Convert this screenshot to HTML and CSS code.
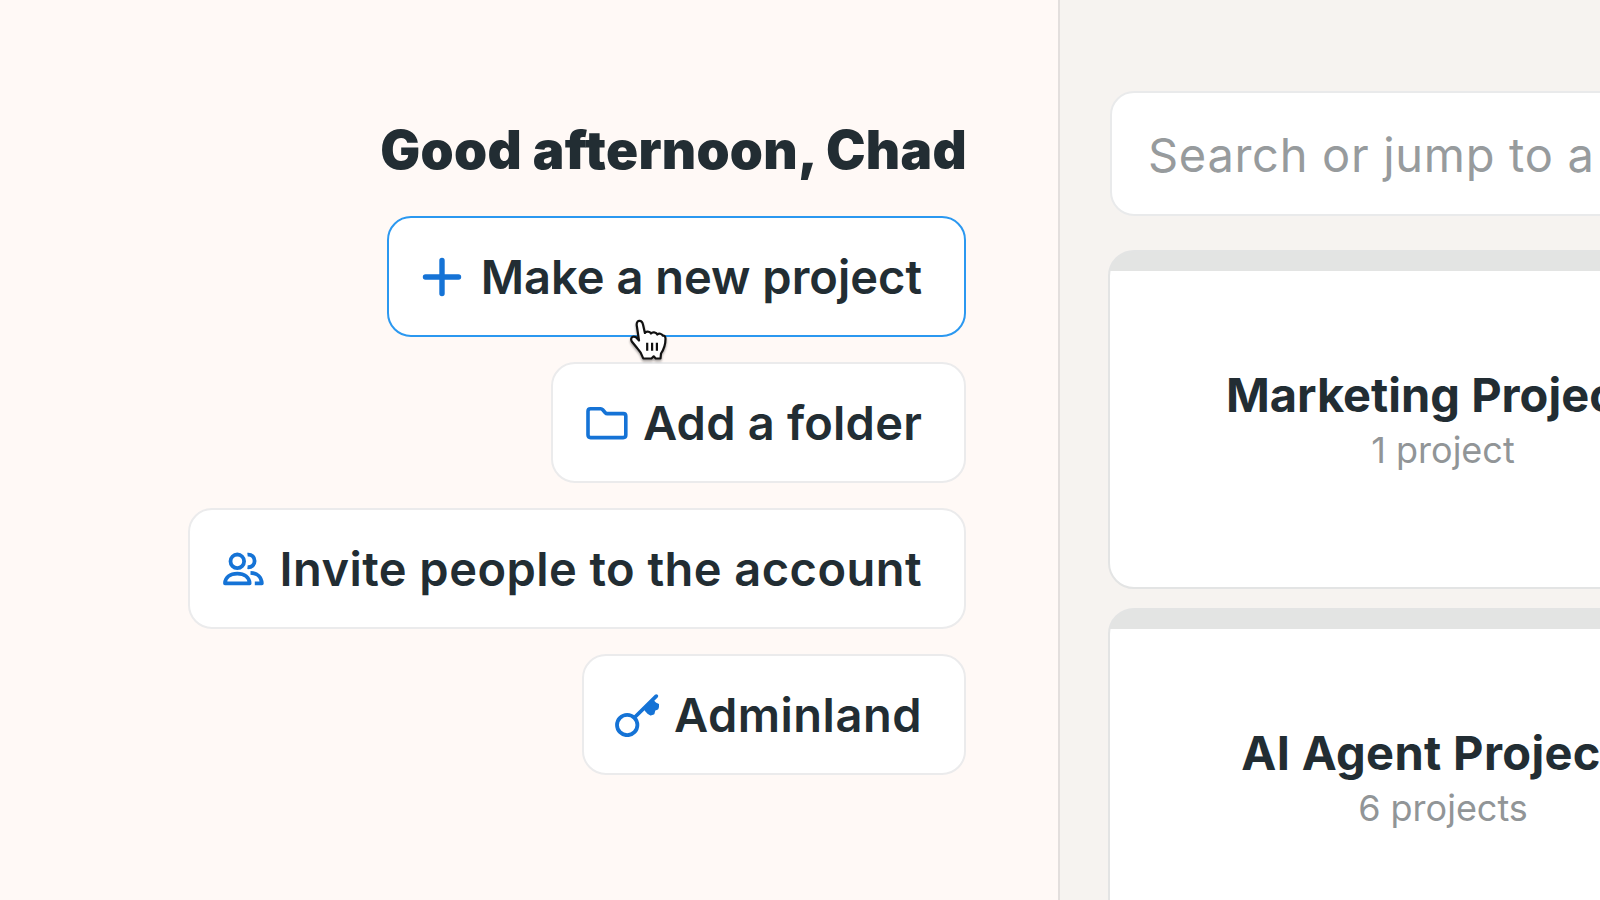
FILE: index.html
```html
<!DOCTYPE html>
<html lang="en">
<head>
  <meta charset="UTF-8">
  <meta name="viewport" content="width=device-width, initial-scale=1.0">
  <title>Home</title>
  <link rel="stylesheet" href="styles.css">
</head>
<body>
  <aside class="sidebar">
    <h1>Good afternoon, Chad</h1>

    <nav class="actions">
      <a class="btn btn-project active">
        <svg class="icon" viewBox="0 0 44 44">
          <path d="M22 5.500v33M5.500 22h33" stroke-width="5.4" stroke-linecap="round"/>
        </svg>
        <span>Make a new project</span>
        <svg class="cursor" viewBox="0 0 40 44">
          <path d="M10 21.500 8 8C7.200 4.500 8 2.200 10 1.900c2-.3 3.500 1.200 4.100 4L15.900 14c.8-2 4.900-2 6.100.500 1.200-1.800 5.300-1.500 6.300 1 1.500-1.500 4.700-1 5.400 1.200 1.700-.4 2.800.8 2.800 3 0 5.300-1.500 10.300-4.500 14.800l-.5 5h-4.800l-2-2.200-2.200 2.200h-8.200c-1.300-4.300-3.300-7.500-6-10.200L2.800 22.500c-1.900-3.500 1.100-6.200 4.200-4.300Z"/>
          <path d="M18.200 23.800v8M23.100 23.800v8M27.900 23.800v8"/>
        </svg>
      </a>
      <a class="btn btn-folder">
        <svg class="icon" viewBox="0 0 44 44">
          <path d="M4 10.300q0-2.500 2.500-2.500h10.200q1.200 0 2 .9l2.600 3q.8.9 2 .9h16q2.500 0 2.500 2.500v19q0 2.500-2.500 2.500h-32.800q-2.500 0-2.500-2.500Z" stroke-width="3.6"/>
        </svg>
        <span>Add a folder</span>
      </a>
      <a class="btn btn-invite">
        <svg class="icon" viewBox="0 0 44 44">
          <circle cx="16.300" cy="14.300" r="6.8" stroke-width="3.8"/>
          <path d="M26.500 7.600c4.100-.5 7.100 2.500 7.100 6.300 0 4-3.200 6.800-7.100 6.300M4 36.300c.3-5.800 5-9.600 12.300-9.600s12 3.800 12.300 9.600ZM29.500 25.800c6.700.2 11 4.400 11.300 10.500h-7" stroke-width="3.8"/>
        </svg>
        <span>Invite people to the account</span>
      </a>
      <a class="btn btn-admin">
        <svg class="icon" viewBox="0 0 44 44">
          <circle cx="12.200" cy="32" r="10.200" stroke-width="3.8"/>
          <path d="M19.500 24.500 41.300 3.200" stroke-width="3.8" stroke-linecap="round"/>
          <path d="M30.500 17 38.500 8.500 40.500 10.500 43.500 12 42.500 15.500 39.500 16.800 38.500 20.500 35.500 21.500 33 19.800Z" fill="#1573d6" stroke-width="2"/>
        </svg>
        <span>Adminland</span>
      </a>
    </nav>
  </aside>

  <main class="content">
    <div class="search">Search or jump to a</div>

    <section class="card">
      <h2>Marketing Projects</h2>
      <p>1 project</p>
    </section>
    <section class="card card-agent">
      <h2>AI Agent Projects</h2>
      <p>6 projects</p>
    </section>
  </main>
</body>
</html>
```
FILE: styles.css
```css
* {
  box-sizing: border-box;
}
body {
  display: flex;
  width: 1600px;
  height: 900px;
  margin: 0;
  overflow: hidden;
  background-color: #fff9f6;
  color: #222d33;
  font-family: Inter, "Liberation Sans", sans-serif;
}
h1, h2, p {
  margin: 0;
  white-space: nowrap;
}

/* left column */
.sidebar {
  flex: none;
  display: flex;
  flex-direction: column;
  align-items: flex-end;
  width: 1060px;
  padding: 120px 91px 0 0;
  border-right: 2px solid #e3dfdd;
}
h1 {
  height: 96px;
  font-size: 53px;
  line-height: 60px;
  font-weight: 900;
  letter-spacing: 0.3px;
}
.actions {
  display: flex;
  flex-direction: column;
  align-items: flex-end;
  gap: 25px;
  margin-right: 1px;
}
.btn {
  position: relative;
  display: flex;
  align-items: center;
  gap: 15px;
  height: 121px;
  padding: 0 42px 0 31px;
  border: 2px solid #ebebec;
  border-radius: 24px;
  background-color: #fff;
  font-size: 47px;
  line-height: 60px;
  font-weight: 600;
  white-space: nowrap;
}
.btn.active {
  border-color: #2b98f0;
}
.btn-project {
  gap: 17px;
}
.btn-folder {
  letter-spacing: 0.2px;
}
.btn-invite {
  letter-spacing: 0.45px;
}
.btn-admin {
  letter-spacing: 0.5px;
}
.icon {
  flex: none;
  width: 44px;
  height: 44px;
  fill: none;
  stroke: #1573d6;
  stroke-linejoin: round;
}
.cursor {
  position: absolute;
  z-index: 1;
  left: 240px;
  top: 101px;
  width: 40px;
  height: 44px;
  fill: #fff;
  stroke: #111;
  stroke-width: 2.2;
  stroke-linejoin: round;
  filter: drop-shadow(0 2px 1px rgba(0, 0, 0, 0.35));
}

/* right column */
.content {
  flex: none;
  width: 540px;
  height: 900px;
  padding: 91px 0 0 48px;
  overflow: hidden;
  background-color: #f6f3f0;
}
.search {
  width: 666px;
  height: 125px;
  margin: 0 0 34px 2px;
  padding: 32px 0 0 36px;
  border: 2px solid #e9eaeb;
  border-radius: 24px;
  background-color: #fff;
  color: #979b9d;
  font-size: 47px;
  line-height: 60px;
  letter-spacing: 0.7px;
  white-space: nowrap;
}
.card {
  width: 670px;
  height: 339px;
  margin-bottom: 19px;
  padding-top: 111px;
  border: 2px solid #e3e4e4;
  border-radius: 26px;
  background: linear-gradient(#e3e4e3 19px, #fff 19px);
  text-align: center;
}
.card h2 {
  font-size: 47px;
  line-height: 64px;
  font-weight: 700;
}
.card-agent h2 {
  letter-spacing: 0.35px;
}
.card p {
  color: #919597;
  font-size: 36px;
  line-height: 46px;
}
```
